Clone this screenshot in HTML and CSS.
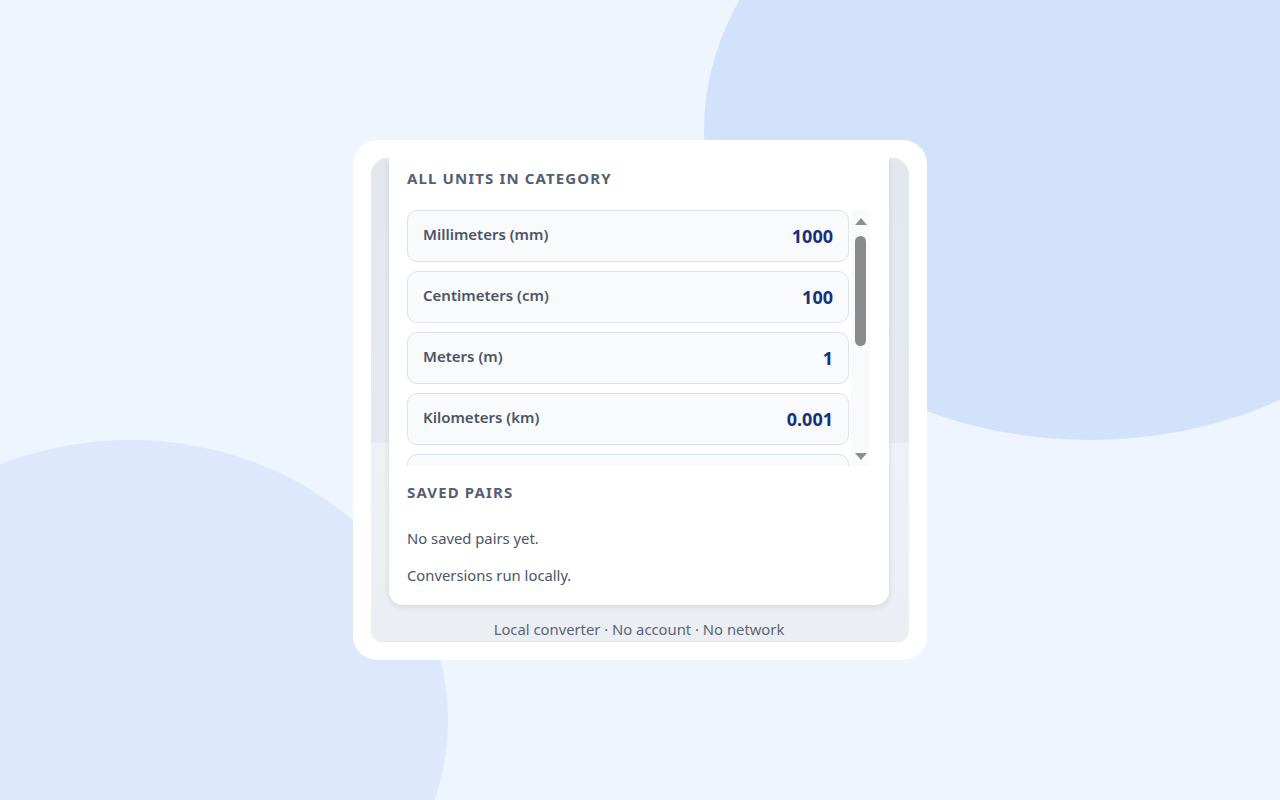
FILE: index.html
```html
<!DOCTYPE html>
<html lang="en">
<head>
  <meta charset="UTF-8" />
  <meta name="viewport" content="width=device-width, initial-scale=1.0"/>
  <title>Unit Converter</title>
  <link rel="stylesheet" href="styles.css">
</head>
<body>
  <div class="backdrop">
    <div class="blob blob-top"></div>
    <div class="blob blob-bottom"></div>
  </div>

  <div class="frame">
    <div class="panel">
      <div class="card">
        <!-- All units -->
        <h3 class="section-title">All units in category</h3>
        <div class="unit-list">
          <div class="unit-rows">
            <div class="unit-row"><span class="unit-name">Millimeters (mm)</span><span class="unit-value">1000</span></div>
            <div class="unit-row"><span class="unit-name">Centimeters (cm)</span><span class="unit-value">100</span></div>
            <div class="unit-row"><span class="unit-name">Meters (m)</span><span class="unit-value">1</span></div>
            <div class="unit-row"><span class="unit-name">Kilometers (km)</span><span class="unit-value">0.001</span></div>
            <div class="unit-row"></div>
          </div>
          <div class="scrollbar">
            <span class="arrow arrow-up"></span>
            <span class="thumb"></span>
            <span class="track"></span>
            <span class="arrow arrow-down"></span>
          </div>
        </div>

        <!-- Saved pairs -->
        <h3 class="section-title saved-title">Saved pairs</h3>
        <p class="muted first">No saved pairs yet.</p>
        <p class="muted">Conversions run locally.</p>
      </div>
      <div class="footer">Local converter · No account · No network</div>
    </div>
  </div>
</body>
</html>
```

FILE: styles.css
```css
body {
  font-family: "Noto Sans", "Open Sans", Arial, sans-serif;
  background-color: #eef5ff;
  margin: 0;
  height: 800px;
  overflow: hidden;
  display: flex;
  align-items: center;
  justify-content: center;
}

.backdrop {
  position: fixed;
  inset: 0;
  overflow: hidden;
}

.blob {
  position: absolute;
  border-radius: 50%;
}

.blob-top {
  left: 704px;
  top: -180px;
  width: 772px;
  height: 620px;
  background: #d3e2fb;
}

.blob-bottom {
  left: -188px;
  top: 440px;
  width: 636px;
  height: 560px;
  background: #dde8fc;
}

.frame {
  position: relative;
  width: 574px;
  height: 520px;
  box-sizing: border-box;
  padding: 18px;
  background: #fff;
  border-radius: 24px;
}

.panel {
  height: 484px;
  box-sizing: border-box;
  padding: 0 20px 0 18px;
  border-radius: 16px 16px 12px 12px;
  overflow: hidden;
  background: linear-gradient(180deg, #e3e8ef 0, #e6eaf0 285px, #eef1f6 285px, #ebeef3 100%);
  border-bottom: 1px solid #ece3d4;
}

.card {
  background: #fff;
  border-radius: 0 0 14px 14px;
  padding: 10px 18px 20px;
  box-shadow: 0 2px 6px rgba(15, 23, 42, 0.1);
}

.section-title {
  margin: 0;
  font-size: 15px;
  line-height: 20px;
  font-weight: 700;
  letter-spacing: 0.075em;
  text-transform: uppercase;
  color: #526074;
}

.unit-list {
  display: flex;
  height: 256px;
  margin-top: 22px;
  overflow: hidden;
}

.unit-rows {
  width: 442px;
  display: flex;
  flex-direction: column;
  gap: 9px;
  flex-shrink: 0;
}

.unit-row {
  height: 52px;
  flex-shrink: 0;
  box-sizing: border-box;
  display: flex;
  align-items: center;
  justify-content: space-between;
  padding: 0 15px;
  border: 1px solid #dbe3ee;
  border-radius: 10px;
  background: #f8fafc;
}

.unit-name {
  font-size: 15px;
  font-weight: 600;
  color: #4b5567;
  margin-top: -4px;
}

.unit-value {
  font-size: 18px;
  font-weight: 700;
  color: #1a2f7a;
}

.scrollbar {
  width: 19px;
  margin-left: 2px;
  display: flex;
  flex-direction: column;
  align-items: center;
  background: #f9fafb;
  padding: 8px 0 6px;
  box-sizing: border-box;
}

.arrow {
  width: 0;
  height: 0;
  border-left: 6px solid transparent;
  border-right: 6px solid transparent;
}

.arrow-up {
  border-bottom: 7px solid #8f8f8f;
}

.arrow-down {
  border-top: 7px solid #8f8f8f;
}

.thumb {
  width: 11px;
  height: 110px;
  margin-top: 11px;
  border-radius: 6px;
  background: #8a8a8a;
}

.track {
  flex: 1;
}

.saved-title {
  margin-top: 16px;
}

.muted {
  margin: 17px 0 0;
  font-size: 14.8px;
  line-height: 20px;
  color: #4b5567;
}

.muted.first {
  margin-top: 26px;
}

.footer {
  margin-top: 14px;
  text-align: center;
  font-size: 14.8px;
  line-height: 20px;
  color: #5b6678;
}
```
